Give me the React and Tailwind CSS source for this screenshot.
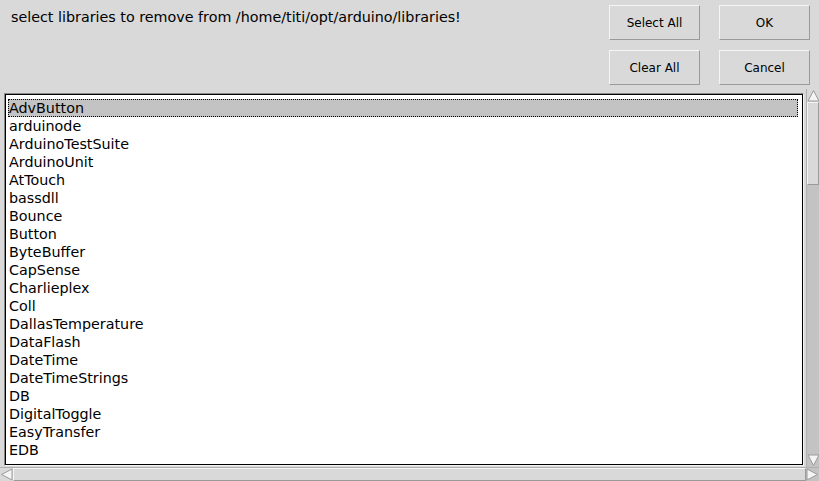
import React, { useState } from 'react';

const libraries = [
  'AdvButton',
  'arduinode',
  'ArduinoTestSuite',
  'ArduinoUnit',
  'AtTouch',
  'bassdll',
  'Bounce',
  'Button',
  'ByteBuffer',
  'CapSense',
  'Charlieplex',
  'Coll',
  'DallasTemperature',
  'DataFlash',
  'DateTime',
  'DateTimeStrings',
  'DB',
  'DigitalToggle',
  'EasyTransfer',
  'EDB',
];

const TkButton = ({ label }) => (
  <button className="w-[91px] h-[35px] bg-[#d9d9d9] border border-t-[#f5f5f5] border-l-[#f5f5f5] border-b-[#9a9a9a] border-r-[#9a9a9a] text-[12px] text-black flex items-center justify-center">
    {label}
  </button>
);

const Arrow = ({ dir }) => {
  const points = {
    up: '6.5,1.5 12,12 1,12',
    down: '1,1 12,1 6.5,11.5',
    left: '1.5,6.5 12,1 12,12',
    right: '11.5,6.5 1,1 1,12',
  }[dir];
  return (
    <svg width="13" height="13" viewBox="0 0 13 13" className="block">
      <polygon points={points} fill="#f4f4f4" stroke="#9a9a9a" strokeWidth="1" />
    </svg>
  );
};

const App = () => {
  const [selected, setSelected] = useState('AdvButton');

  return (
    <div
      className="w-[819px] h-[481px] bg-[#d9d9d9] flex flex-col overflow-hidden text-black"
      style={{ fontFamily: '"DejaVu Sans", "Liberation Sans", sans-serif' }}
    >
      <div className="h-[92px] flex justify-between pl-[11px] pr-[9px] pt-[5px]">
        <div className="text-[14.3px] leading-[17px] pt-[4px]">
          select libraries to remove from /home/titi/opt/arduino/libraries!
        </div>
        <div className="grid grid-cols-[91px_91px] gap-x-[19px] gap-y-[10px] content-start">
          <TkButton label="Select All" />
          <TkButton label="OK" />
          <TkButton label="Clear All" />
          <TkButton label="Cancel" />
        </div>
      </div>

      <div className="flex flex-1 min-h-0">
        <div className="flex-1 pl-[4px] pr-[2px] pt-[1px] pb-[1px] min-w-0">
          <div className="h-full border border-t-[#8a8a8a] border-l-[#8a8a8a] border-b-[#f5f5f5] border-r-[#f5f5f5]">
            <div className="h-full border border-black bg-white pl-[2px] pr-[4px] pt-[4px] overflow-hidden">
              {libraries.map((name) => (
                <div
                  key={name}
                  onClick={() => setSelected(name)}
                  className={
                    name === selected
                      ? 'h-[18px] leading-[16px] text-[14.3px] pl-[0px] bg-[#c3c3c3] border border-dotted border-black'
                      : 'h-[18px] leading-[18px] text-[14.3px] pl-[1px]'
                  }
                >
                  {name}
                </div>
              ))}
            </div>
          </div>
        </div>

        <div className="w-[13px] flex flex-col bg-[#c3c3c3] border-l border-[#b0b0b0] -mt-[3px]">
          <div className="bg-[#d9d9d9]">
            <Arrow dir="up" />
          </div>
          <div className="h-[83px] bg-[#d9d9d9] border border-t-[#f5f5f5] border-l-[#f5f5f5] border-b-[#9a9a9a] border-r-[#9a9a9a]" />
          <div className="flex-1" />
          <div className="bg-[#c3c3c3]">
            <Arrow dir="down" />
          </div>
        </div>
      </div>

      <div className="h-[14px] flex border-t border-[#b0b0b0] bg-[#c3c3c3]">
        <div className="bg-[#d9d9d9]">
          <Arrow dir="left" />
        </div>
        <div className="flex-1 bg-[#d9d9d9] border border-t-[#f5f5f5] border-l-[#f5f5f5] border-b-[#9a9a9a] border-r-[#9a9a9a]" />
        <div className="bg-[#c3c3c3]">
          <Arrow dir="right" />
        </div>
      </div>
    </div>
  );
};

export default App;
